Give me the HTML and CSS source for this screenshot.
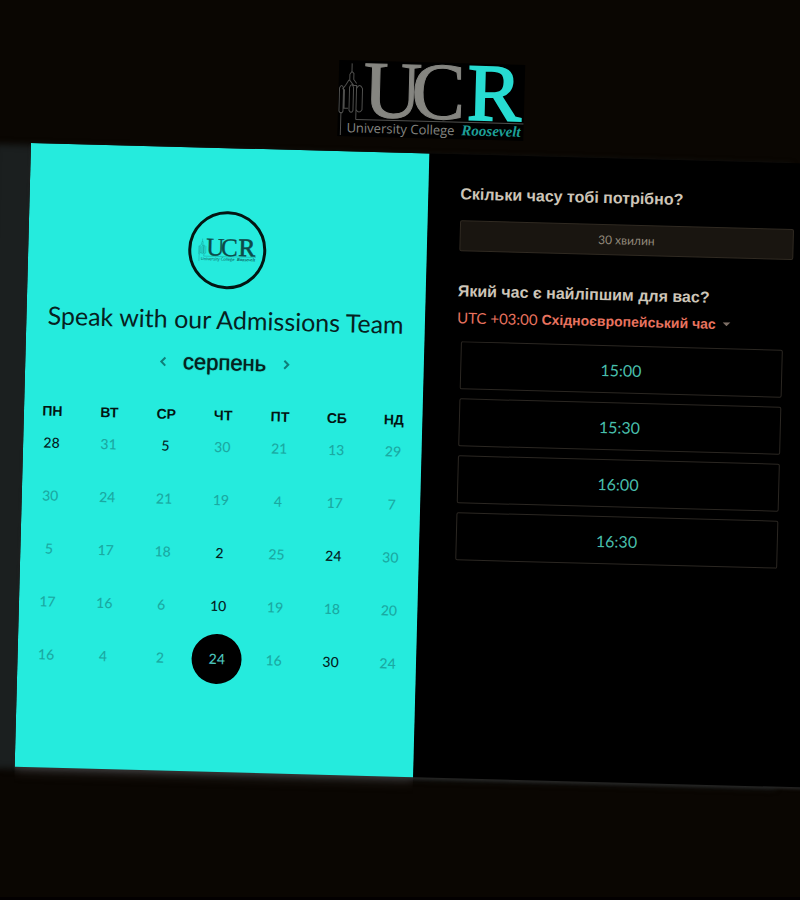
FILE: index.html
```html
<!DOCTYPE html>
<html lang="uk">
<head>
<meta charset="utf-8">
<meta name="viewport" content="width=device-width, initial-scale=1">
<title>Speak with our Admissions Team</title>
<link rel="stylesheet" href="styles.css">
</head>
<body>
<div class="stage">
  <header class="header">
    <svg class="logo" viewBox="0 0 186 76" role="img" aria-label="University College Roosevelt">
      <defs>
        <g id="ucr">
          <path class="tower" d="M3 75V52M18 59V25H15L11 20H10L7 25L4 29M13 3V12M11 20V14L13 11L15 13V19L18 23M1 28Q3 23 5 28V51Q3 55 1 51ZM6 29V48H10M11 27Q13 22 15 27V50Q13 54 11 50ZM18 28Q21 22 24 28V49Q21 54 18 49Z"/>
          <path class="rule" d="M18 59H186"/>
          <text class="initials" x="25" y="56">U</text>
          <text class="initials" x="73" y="56">C</text>
          <text class="initials initial-r" x="129" y="56">R</text>
          <text class="college" x="9" y="72">University College</text>
          <text class="roosevelt" x="124" y="72">Roosevelt</text>
        </g>
      </defs>
      <use href="#ucr"/>
    </svg>
  </header>

  <main class="card">
    <section class="date-panel">
      <div class="avatar">
        <svg class="logo-small" viewBox="0 0 186 76" aria-hidden="true"><use href="#ucr"/></svg>
      </div>
      <h1 class="title">Speak with our Admissions Team</h1>
      <div class="month">
        <button class="arrow" type="button" aria-label="Попередній місяць"><svg viewBox="0 0 8 12"><path d="M6 2L2 6L6 10"/></svg></button>
        <h2 class="month-name">серпень</h2>
        <button class="arrow" type="button" aria-label="Наступний місяць"><svg viewBox="0 0 8 12"><path d="M2 2L6 6L2 10"/></svg></button>
      </div>
      <table class="calendar">
        <thead>
          <tr><th>ПН</th><th>ВТ</th><th>СР</th><th>ЧТ</th><th>ПТ</th><th>СБ</th><th>НД</th></tr>
        </thead>
        <tbody>
          <tr><td><button class="day open">28</button></td><td><button class="day" disabled>31</button></td><td><button class="day open">5</button></td><td><button class="day" disabled>30</button></td><td><button class="day" disabled>21</button></td><td><button class="day" disabled>13</button></td><td><button class="day" disabled>29</button></td></tr>
          <tr><td><button class="day" disabled>30</button></td><td><button class="day" disabled>24</button></td><td><button class="day" disabled>21</button></td><td><button class="day" disabled>19</button></td><td><button class="day" disabled>4</button></td><td><button class="day" disabled>17</button></td><td><button class="day" disabled>7</button></td></tr>
          <tr><td><button class="day" disabled>5</button></td><td><button class="day" disabled>17</button></td><td><button class="day" disabled>18</button></td><td><button class="day open">2</button></td><td><button class="day" disabled>25</button></td><td><button class="day open">24</button></td><td><button class="day" disabled>30</button></td></tr>
          <tr><td><button class="day" disabled>17</button></td><td><button class="day" disabled>16</button></td><td><button class="day" disabled>6</button></td><td><button class="day open">10</button></td><td><button class="day" disabled>19</button></td><td><button class="day" disabled>18</button></td><td><button class="day" disabled>20</button></td></tr>
          <tr><td><button class="day" disabled>16</button></td><td><button class="day" disabled>4</button></td><td><button class="day" disabled>2</button></td><td><button class="day selected" aria-pressed="true">24</button></td><td><button class="day" disabled>16</button></td><td><button class="day open">30</button></td><td><button class="day" disabled>24</button></td></tr>
        </tbody>
      </table>
    </section>

    <section class="time-panel">
      <h2 class="question">Скільки часу тобі потрібно?</h2>
      <button class="duration" type="button">30 хвилин</button>
      <h2 class="question">Який час є найліпшим для вас?</h2>
      <div class="zone">
        <label class="zone-offset" for="zone">UTC +03:00</label>
        <select class="zone-select" id="zone"><option>Східноєвропейський час</option></select>
        <svg class="caret" viewBox="0 0 8 4" aria-hidden="true"><path d="M0 0H8L4 4Z"/></svg>
      </div>
      <div class="slots">
        <button class="slot" type="button">15:00</button>
        <button class="slot" type="button">15:30</button>
        <button class="slot" type="button">16:00</button>
        <button class="slot" type="button">16:30</button>
      </div>
    </section>
  </main>
</div>
</body>
</html>
```
FILE: styles.css
```css
* {
  box-sizing: border-box;
}

body {
  margin: 0;
  min-height: 100vh;
  overflow: hidden;
  background: #0a0602;
  border-bottom: 3px solid #030001;
  font-family: Lato, "Liberation Sans", sans-serif;
}

h1, h2 {
  margin: 0;
}

button, select {
  margin: 0;
  padding: 0;
  border: 0;
  background: none;
  font-family: inherit;
}

/* The whole booking page leans slightly clockwise, pivoting on the card corner. */
.stage {
  width: calc(100% - 3px);
  margin-left: 31px;
  transform: rotate(1.5deg);
  transform-origin: 0 143px;
}

.header {
  display: flex;
  justify-content: center;
  padding: 52px 0 15px;
}

.logo {
  width: 186px;
  height: 76px;
  background: #000;
  --ink: #858580;
  --line: #50504e;
  --accent: #27dcd2;
  --accent-soft: #1d9f98;
}

.logo-small {
  width: 58px;
  height: 24px;
  --ink: #0d4a49;
  --line: #14716d;
  --accent: #0d4a49;
  --accent-soft: #0d5f5c;
}

.tower, .rule {
  fill: none;
  stroke: var(--line);
}

.initials {
  font-family: "Liberation Serif", serif;
  font-size: 81px;
  fill: var(--ink);
  stroke: var(--ink);
}

.initial-r {
  fill: var(--accent);
  stroke: var(--accent);
  stroke-width: 2px;
}

.college {
  font-family: "Open Sans", sans-serif;
  font-size: 13px;
  fill: var(--ink);
}

.roosevelt {
  font-family: "Liberation Serif", serif;
  font-size: 15px;
  font-weight: bold;
  font-style: italic;
  fill: var(--accent-soft);
}

.card {
  display: grid;
  grid-template-columns: 1fr 1fr;
  min-height: 624px;
  background: #000;
  box-shadow: 0 2px 3px #262625, -36px 2px 6px #1b1f1f;
}

.date-panel {
  display: flex;
  flex-direction: column;
  align-items: center;
  padding-top: 63px;
  background: #25ebdd;
  box-shadow: 0 3px 12px #3a3636;
  clip-path: inset(0 0 -20px 0);
}

.avatar {
  display: flex;
  align-items: center;
  justify-content: center;
  width: 78px;
  height: 78px;
  border: 3px solid #041512;
  border-radius: 50%;
}

.title {
  margin-top: 14px;
  color: #07211f;
  font-size: 25px;
  font-weight: 400;
  line-height: 32px;
  white-space: nowrap;
}

.month {
  display: flex;
  align-items: center;
  gap: 12px;
  margin-top: 14px;
}

.month-name {
  color: #06211f;
  font-family: "Liberation Sans", sans-serif;
  font-size: 22px;
  font-weight: 400;
  line-height: 28px;
  text-shadow: 0 0 1px #06211f;
}

.arrow {
  display: flex;
  padding: 4px;
}

.arrow svg {
  width: 8px;
  height: 12px;
  fill: none;
  stroke: #0f7f79;
  stroke-width: 2px;
}

.calendar {
  width: 100%;
  margin-top: 33px;
  border-collapse: collapse;
  table-layout: fixed;
}

.calendar th {
  height: 10px;
  padding: 0;
  color: #031513;
  font-family: "Liberation Sans", sans-serif;
  font-size: 14px;
  line-height: 10px;
}

.calendar td {
  height: 53px;
  padding: 0;
  text-align: center;
  vertical-align: middle;
}

.day {
  width: 50px;
  height: 50px;
  border-radius: 50%;
  color: #1aa9a2;
  font-size: 14px;
  font-weight: 500;
}

.day.open {
  color: #03201e;
}

.day.selected {
  background: #000;
  color: #4cc4bd;
}

.time-panel {
  display: flex;
  flex-direction: column;
  padding: 30px 32px;
}

.question {
  color: #cdc5b8;
  font-family: "Liberation Sans", sans-serif;
  font-size: 16px;
  line-height: 20px;
}

.duration {
  height: 31px;
  margin: 16px 0 30px;
  border: 1px solid #302a22;
  border-radius: 2px;
  background: #191510;
  color: #91887a;
  font-size: 12px;
}

.zone {
  display: flex;
  align-items: center;
  gap: 4px;
  height: 20px;
  margin-top: 6px;
  color: #e8735f;
}

.zone-offset {
  font-size: 15px;
}

.zone-select {
  appearance: none;
  color: inherit;
  font-family: "Liberation Sans", sans-serif;
  font-size: 14px;
  font-weight: bold;
}

.caret {
  width: 8px;
  height: 4px;
  margin-left: 2px;
  fill: #7d6f66;
}

.slots {
  display: grid;
  gap: 9px;
  margin: 14px 8px 0 4px;
}

.slot {
  height: 48px;
  border: 1px solid #2b2722;
  border-radius: 2px;
  color: #48bfac;
  font-size: 16px;
}
```
